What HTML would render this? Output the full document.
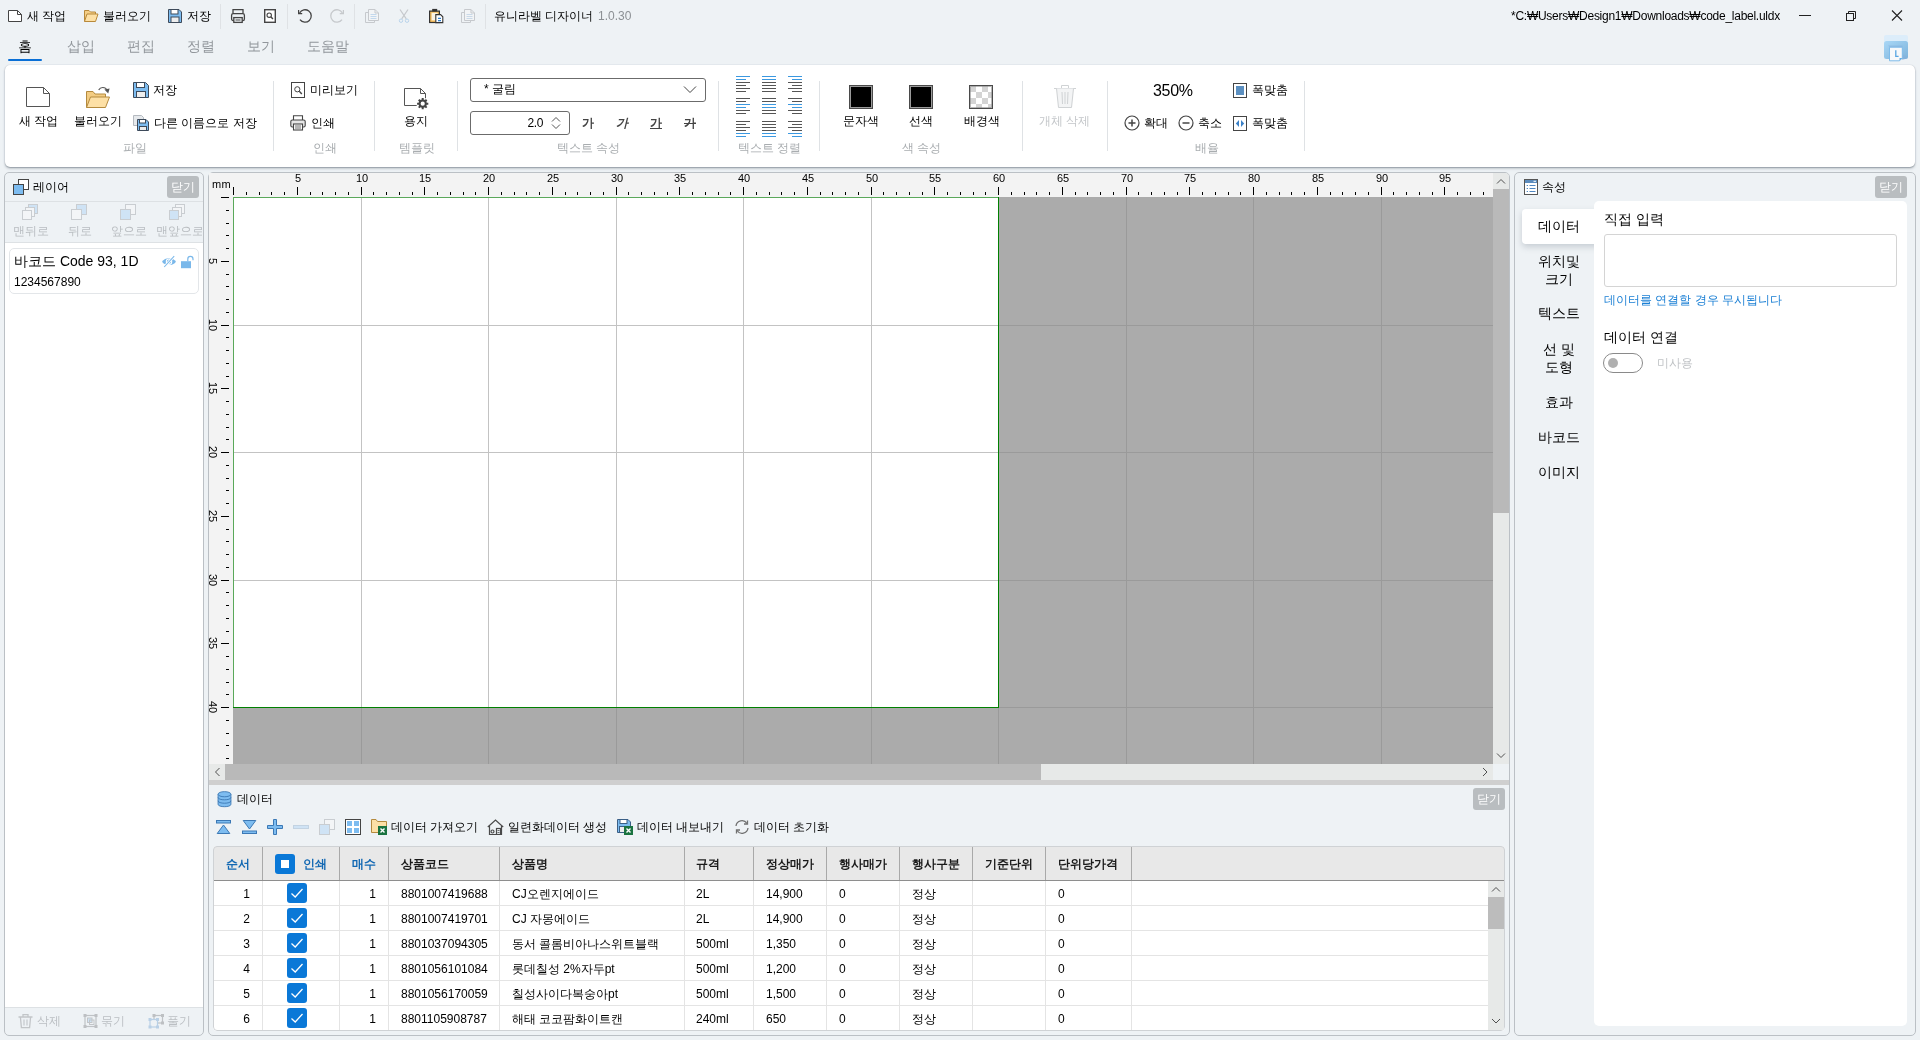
<!DOCTYPE html>
<html lang="ko">
<head>
<meta charset="utf-8">
<title>유니라벨 디자이너</title>
<style>
*{box-sizing:border-box;margin:0;padding:0}
html,body{width:1920px;height:1040px;overflow:hidden}
body{background:#eef2f5;font-family:"Liberation Sans",sans-serif;font-size:12px;color:#000;position:relative}
.abs{position:absolute}
.t{position:absolute;white-space:nowrap;line-height:16px;font-size:12px;color:#000}
.g{color:#a9adb0}
.sep{position:absolute;width:1px;background:#dfe2e5}
.rl{width:30px;text-align:center;font-size:11px;line-height:12px;color:#000}
.rlv{width:30px;height:12px;text-align:center;font-size:11px;line-height:12px;color:#000;transform:rotate(90deg)}
.th{font-size:12px;font-weight:bold;line-height:16px;white-space:nowrap;color:#1a1a1a}
.th.blue{color:#1268b3}
.td{font-size:12px;line-height:14px;white-space:nowrap;color:#000}
.close{position:absolute;width:32px;height:22px;border-radius:3px;background:#b9bdc0;color:#fff;font-size:12px;line-height:22px;text-align:center}
.panel{position:absolute;border:1px solid #bbc0c5;border-radius:5px;background:#eef2f5}
</style>
</head>
<body>
<div id="app" style="position:absolute;left:0;top:0;width:1920px;height:1040px;will-change:transform">
<!-- ===== title bar ===== -->
<svg class="abs" style="left:8px;top:10px" width="15" height="13" viewBox="0 0 15 13"><path d="M0.5 0.5 H9.5 L13.5 4.5 V11.5 H0.5 Z" fill="#fff" stroke="#444" stroke-width="1"/><path d="M9.5 0.5 V4.5 H13.5" fill="none" stroke="#444" stroke-width="1"/></svg>
<div class="t" style="left:27px;top:8px">새 작업</div>
<svg class="abs" style="left:84px;top:9px" width="15" height="14" viewBox="0 0 15 14"><path d="M0.5 12.5 V1.5 H5 L6.5 3 H11.5 V5" fill="#f5cf87" stroke="#b8893a" stroke-width="1"/><path d="M0.5 12.5 L3 5 H14 L11.5 12.5 Z" fill="#fde0a5" stroke="#b8893a" stroke-width="1"/></svg>
<div class="t" style="left:103px;top:8px">불러오기</div>
<svg class="abs" style="left:168px;top:9px" width="14" height="14" viewBox="0 0 14 14"><path d="M0.5 0.5 H11 L13.5 3 V13.5 H0.5 Z" fill="#7dbcf0" stroke="#3d4a5a" stroke-width="1"/><rect x="3" y="0.5" width="7" height="4.5" fill="#fff" stroke="#3d4a5a" stroke-width="1"/><rect x="3" y="8" width="8" height="5.5" fill="#eee" stroke="#3d4a5a" stroke-width="1"/></svg>
<div class="t" style="left:187px;top:8px">저장</div>
<div class="sep" style="left:220px;top:4px;height:25px"></div>
<!-- print -->
<svg class="abs" style="left:230px;top:8px" width="16" height="16" viewBox="0 0 16 16" fill="none" stroke="#444" stroke-width="1.3"><path d="M3 5.5 V1.7 H13 V5.5"/><rect x="1.6" y="5.6" width="12.8" height="7" rx="1.6"/><rect x="3.8" y="9.6" width="8.4" height="4.8" fill="#eef2f5"/><path d="M5.5 12 H10.5" stroke-width="1"/></svg>
<!-- preview -->
<svg class="abs" style="left:263px;top:8px" width="14" height="16" viewBox="0 0 14 16" fill="none" stroke="#444" stroke-width="1.4"><rect x="1.7" y="1.7" width="10.6" height="12.6" fill="#fff"/><circle cx="6.2" cy="7.2" r="2.2" stroke-width="1.1"/><path d="M7.8 8.8 L9.9 11" stroke-width="1.5"/></svg>
<div class="sep" style="left:287px;top:4px;height:25px"></div>
<!-- undo / redo -->
<svg class="abs" style="left:297px;top:8px" width="16" height="16" viewBox="0 0 16 16" fill="none" stroke="#444" stroke-width="1.3"><path d="M2.6 5 A6.2 6.2 0 1 1 3 11.6"/><path d="M1.6 2 V5.6 H5.2" stroke-width="1.2"/></svg>
<svg class="abs" style="left:329px;top:8px" width="16" height="16" viewBox="0 0 16 16" fill="none" stroke="#c6c9cc" stroke-width="1.3"><path d="M13.4 5 A6.2 6.2 0 1 0 13 11.6"/><path d="M14.4 2 V5.6 H10.8" stroke-width="1.2"/></svg>
<div class="sep" style="left:354px;top:4px;height:25px"></div>
<!-- copy (disabled) -->
<svg class="abs" style="left:364px;top:8px" width="16" height="16" viewBox="0 0 16 16" fill="none" stroke="#c6c9cd" stroke-width="1"><path d="M4.5 4.5 H1.5 V14.5 H10.5 V12.5"/><path d="M4.5 1.5 H11 L14.5 5 V12.5 H4.5 Z" fill="#f2f4f6"/><path d="M11 1.5 V5 H14.5"/><path d="M6.5 6.5 H12.5 M6.5 8.5 H12.5 M6.5 10.5 H12.5" stroke="#c2d8ed"/></svg>
<!-- cut (disabled) -->
<svg class="abs" style="left:397px;top:8px" width="14" height="16" viewBox="0 0 14 16" fill="none" stroke="#c6c9cd" stroke-width="1.2"><path d="M3 1.5 L9.3 10.8 M11 1.5 L4.7 10.8"/><circle cx="4" cy="12.7" r="1.7" stroke="#b9d3ea" stroke-width="1"/><circle cx="10" cy="12.7" r="1.7" stroke="#b9d3ea" stroke-width="1"/></svg>
<!-- paste -->
<svg class="abs" style="left:428px;top:8px" width="16" height="16" viewBox="0 0 16 16"><rect x="1.6" y="3.1" width="9.8" height="11.4" fill="#f6bd5c" stroke="#333" stroke-width="1.2"/><rect x="3.6" y="4.8" width="6" height="7.6" fill="#fbf3e4"/><rect x="4.2" y="0.9" width="5" height="2.6" fill="#333"/><path d="M7.8 6.6 H12.6 L14.8 8.8 V14.6 H7.8 Z" fill="#fff" stroke="#333" stroke-width="1.1"/><path d="M10 10.4 H13 M10 12.6 H13" stroke="#2f7fcf" stroke-width="1.1"/></svg>
<!-- duplicate (disabled) -->
<svg class="abs" style="left:460px;top:8px" width="16" height="16" viewBox="0 0 16 16" fill="none" stroke="#c6c9cd" stroke-width="1"><path d="M4.5 4.5 H1.5 V14.5 H10.5 V12.5"/><path d="M4.5 1.5 H11 L14.5 5 V12.5 H4.5 Z" fill="#f2f4f6"/><path d="M11 1.5 V5 H14.5"/><path d="M6.5 6.5 H12.5 M6.5 8.5 H12.5 M6.5 10.5 H12.5" stroke="#c9d9e8"/></svg>
<div class="sep" style="left:485px;top:4px;height:25px"></div>
<div class="t" style="left:494px;top:8px">유니라벨 디자이너</div>
<div class="t" style="left:598px;top:8px;color:#8c9094">1.0.30</div>
<div class="t" style="left:1511px;top:8px;letter-spacing:-0.26px">*C:₩Users₩Design1₩Downloads₩code_label.uldx</div>
<!-- window buttons -->
<svg class="abs" style="left:1790px;top:4px" width="126" height="24" viewBox="0 0 126 24" fill="none" stroke="#222" stroke-width="1"><path d="M9 11.5 H21"/><rect x="56.5" y="9.5" width="7" height="7"/><path d="M58.5 9.5 V7.5 H65.5 V14.5 H63.5"/><path d="M102 6.5 L112 16.5 M112 6.5 L102 16.5" stroke-width="1.1"/></svg>
<!-- ===== tabs ===== -->
<div class="t" style="left:18px;top:37px;font-size:14px;line-height:18px">홈</div>
<div class="t" style="left:67px;top:37px;font-size:14px;line-height:18px;color:#92979c">삽입</div>
<div class="t" style="left:127px;top:37px;font-size:14px;line-height:18px;color:#92979c">편집</div>
<div class="t" style="left:187px;top:37px;font-size:14px;line-height:18px;color:#92979c">정렬</div>
<div class="t" style="left:247px;top:37px;font-size:14px;line-height:18px;color:#92979c">보기</div>
<div class="t" style="left:307px;top:37px;font-size:14px;line-height:18px;color:#92979c">도움말</div>
<div class="abs" style="left:8px;top:59px;width:34px;height:2px;background:#0a6fd6;border-radius:1px"></div>
<!-- logo -->
<svg class="abs" style="left:1883px;top:34px" width="26" height="28" viewBox="0 0 26 28"><defs><linearGradient id="lg1" x1="0" y1="0" x2="1" y2="1"><stop offset="0" stop-color="#a9d7f6"/><stop offset="1" stop-color="#7db3db"/></linearGradient></defs><rect x="1" y="1" width="24" height="9" rx="2" fill="#dcedfa"/><rect x="1" y="7" width="24" height="18" rx="2.5" fill="url(#lg1)"/><path d="M5 11.5 H19.5 V20 L25 24 L19.5 26 Z" fill="#86aedb" opacity=".55"/><path d="M6.5 13.2 H19.3 V24 L16.5 26.8 H6.5 Z" fill="#f8f9fb" stroke="#7fbce9" stroke-width="1"/><path d="M16.5 26.8 V24 H19.3 Z" fill="#62ade6"/><path d="M12.8 16.2 V22.3 H15.6" fill="none" stroke="#5aa6e2" stroke-width="1.3"/></svg>
<!-- ===== ribbon ===== -->
<div class="abs" style="left:5px;top:65px;width:1910px;height:102px;background:#fff;border-radius:5px;box-shadow:0 1px 1.5px rgba(110,120,130,.6), 0 2px 3px rgba(110,120,130,.22), 0 0 1px rgba(110,120,130,.4)"></div>
<!-- group: file -->
<svg class="abs" style="left:26px;top:87px" width="25" height="21" viewBox="0 0 25 21"><path d="M0.5 0.5 H17.5 L23.5 6.5 V19.5 H0.5 Z" fill="#fff" stroke="#555" stroke-width="1"/><path d="M17.5 0.5 V6.5 H23.5" fill="none" stroke="#555" stroke-width="1"/></svg>
<div class="t" style="left:19px;top:113px">새 작업</div>
<svg class="abs" style="left:86px;top:85px" width="25" height="24" viewBox="0 0 25 24"><path d="M0.5 22.5 V6.5 H7 L9 9 H19.5 V12" fill="#f3cc82" stroke="#b48a3e" stroke-width="1"/><path d="M0.5 22.5 L4.5 12 H23.5 L19.5 22.5 Z" fill="#fde0a6" stroke="#b48a3e" stroke-width="1"/><path d="M12.7 5 A4.6 4.6 0 0 1 21 5.2" fill="none" stroke="#555" stroke-width="1.2"/><path d="M18.4 4.6 L23.6 3.4 L22.2 8.4 Z" fill="#555"/></svg>
<div class="t" style="left:74px;top:113px">불러오기</div>
<svg class="abs" style="left:133px;top:82px" width="16" height="16" viewBox="0 0 16 16"><path d="M0.5 0.5 H12.5 L15.5 3.5 V15.5 H0.5 Z" fill="#7dbcf0" stroke="#3d4a5a" stroke-width="1"/><rect x="3.5" y="0.5" width="8" height="5" fill="#fff" stroke="#3d4a5a" stroke-width="1"/><rect x="3.5" y="9.5" width="9" height="6" fill="#eee" stroke="#3d4a5a" stroke-width="1"/></svg>
<div class="t" style="left:153px;top:82px">저장</div>
<svg class="abs" style="left:133px;top:115px" width="16" height="16" viewBox="0 0 16 16"><path d="M0.5 0.5 H8.5 L10.5 2.5 V10.5 H0.5 Z" fill="#e6e9ec" stroke="#b5bac0" stroke-width="1"/><path d="M4.5 4.5 H13 L15.5 7 V15.5 H4.5 Z" fill="#7dbcf0" stroke="#3d4a5a" stroke-width="1"/><rect x="6.5" y="4.5" width="6" height="3.5" fill="#fff" stroke="#3d4a5a" stroke-width="1"/><rect x="6.5" y="11.5" width="7" height="4" fill="#eee" stroke="#3d4a5a" stroke-width="1"/></svg>
<div class="t" style="left:154px;top:115px">다른 이름으로 저장</div>
<div class="t g" style="left:123px;top:140px">파일</div>
<div class="sep" style="left:273px;top:81px;height:70px"></div>
<!-- group: print -->
<svg class="abs" style="left:291px;top:82px" width="15" height="16" viewBox="0 0 15 16" fill="none" stroke="#444" stroke-width="1"><rect x="0.5" y="0.5" width="13" height="15" fill="#fff"/><circle cx="6.3" cy="7.3" r="2.6"/><path d="M8.3 9.3 L10.8 11.9" stroke-width="1.4"/></svg>
<div class="t" style="left:310px;top:82px">미리보기</div>
<svg class="abs" style="left:290px;top:115px" width="16" height="16" viewBox="0 0 16 16" fill="none" stroke="#444" stroke-width="1.1"><path d="M3.5 5 V0.8 H12.5 V5"/><rect x="0.8" y="5" width="14.4" height="7" rx="1.5" fill="#e6e6e6"/><rect x="3.5" y="9" width="9" height="6" fill="#fff"/><path d="M5 11 H11 M5 13 H11" stroke-width="0.8"/></svg>
<div class="t" style="left:311px;top:115px">인쇄</div>
<div class="t g" style="left:313px;top:140px">인쇄</div>
<div class="sep" style="left:374px;top:81px;height:70px"></div>
<!-- group: template -->
<svg class="abs" style="left:404px;top:88px" width="26" height="23" viewBox="0 0 26 23"><path d="M0.5 0.5 H16.5 L21.5 5.5 V17.5 H0.5 Z" fill="#fff" stroke="#555" stroke-width="1"/><path d="M16.5 0.5 V5.5 H21.5" fill="none" stroke="#555" stroke-width="1"/><circle cx="18.7" cy="15.7" r="6.3" fill="#fff"/><path d="M22.10 15.70 L24.30 15.70 M21.10 18.10 L22.66 19.66 M18.70 19.10 L18.70 21.30 M16.30 18.10 L14.74 19.66 M15.30 15.70 L13.10 15.70 M16.30 13.30 L14.74 11.74 M18.70 12.30 L18.70 10.10 M21.10 13.30 L22.66 11.74 " stroke="#444" stroke-width="2" fill="none"/><circle cx="18.7" cy="15.7" r="3.1" fill="#fff" stroke="#444" stroke-width="2"/></svg>
<div class="t" style="left:404px;top:113px">용지</div>
<div class="t g" style="left:399px;top:140px">템플릿</div>
<div class="sep" style="left:457px;top:81px;height:70px"></div>
<!-- group: text props -->
<div class="abs" style="left:470px;top:78px;width:236px;height:24px;border:1px solid #6b6b6b;border-radius:3px;background:#fff"></div>
<div class="t" style="left:484px;top:81px">* 굴림</div>
<svg class="abs" style="left:682px;top:85px" width="15" height="9" viewBox="0 0 15 9" fill="none" stroke="#444" stroke-width="1"><path d="M2 1.5 L8 7.5 L14 1.5"/></svg>
<div class="abs" style="left:470px;top:111px;width:100px;height:24px;border:1px solid #6b6b6b;border-radius:3px;background:#fff"></div>
<div class="t" style="left:515px;top:115px;width:28px;text-align:right;letter-spacing:-0.4px">2.0</div>
<svg class="abs" style="left:551px;top:116px" width="10" height="14" viewBox="0 0 10 14" fill="none" stroke="#555" stroke-width="1"><path d="M1 5.5 L5 1.5 L9 5.5"/><path d="M1 8.5 L5 12.5 L9 8.5"/></svg>
<div class="t" style="left:582px;top:115px;font-weight:bold;color:#444">가</div>
<div class="t" style="left:616px;top:115px;font-weight:bold;font-style:italic;color:#444">가</div>
<div class="t" style="left:650px;top:115px;font-weight:bold;text-decoration:underline;color:#444">가</div>
<div class="t" style="left:684px;top:115px;font-weight:bold;text-decoration:line-through;color:#444">가</div>
<div class="t g" style="left:557px;top:140px">텍스트 속성</div>
<div class="sep" style="left:718px;top:81px;height:70px"></div>
<!-- group: text align -->
<svg class="abs" style="left:736px;top:76px" width="66" height="61" viewBox="0 0 66 61" shape-rendering="crispEdges">
<rect x="0" y="0" width="14" height="1" fill="#3b98e0"/>
<rect x="0" y="3" width="10" height="1" fill="#3b98e0"/>
<rect x="0" y="6" width="14" height="1" fill="#555"/>
<rect x="0" y="9" width="10" height="1" fill="#555"/>
<rect x="0" y="12" width="14" height="1" fill="#555"/>
<rect x="0" y="15" width="10" height="1" fill="#555"/>
<rect x="26" y="0" width="14" height="1" fill="#3b98e0"/>
<rect x="26" y="3" width="14" height="1" fill="#3b98e0"/>
<rect x="26" y="6" width="14" height="1" fill="#555"/>
<rect x="26" y="9" width="14" height="1" fill="#555"/>
<rect x="26" y="12" width="14" height="1" fill="#555"/>
<rect x="26" y="15" width="14" height="1" fill="#555"/>
<rect x="52" y="0" width="14" height="1" fill="#3b98e0"/>
<rect x="56" y="3" width="10" height="1" fill="#3b98e0"/>
<rect x="52" y="6" width="14" height="1" fill="#555"/>
<rect x="56" y="9" width="10" height="1" fill="#555"/>
<rect x="52" y="12" width="14" height="1" fill="#555"/>
<rect x="56" y="15" width="10" height="1" fill="#555"/>
<rect x="0" y="22" width="14" height="1" fill="#555"/>
<rect x="0" y="25" width="10" height="1" fill="#555"/>
<rect x="0" y="28" width="14" height="1" fill="#3b98e0"/>
<rect x="0" y="31" width="10" height="1" fill="#3b98e0"/>
<rect x="0" y="34" width="14" height="1" fill="#555"/>
<rect x="0" y="37" width="10" height="1" fill="#555"/>
<rect x="26" y="22" width="14" height="1" fill="#555"/>
<rect x="26" y="25" width="14" height="1" fill="#555"/>
<rect x="26" y="28" width="14" height="1" fill="#3b98e0"/>
<rect x="26" y="31" width="14" height="1" fill="#3b98e0"/>
<rect x="26" y="34" width="14" height="1" fill="#555"/>
<rect x="26" y="37" width="14" height="1" fill="#555"/>
<rect x="52" y="22" width="14" height="1" fill="#555"/>
<rect x="56" y="25" width="10" height="1" fill="#555"/>
<rect x="52" y="28" width="14" height="1" fill="#3b98e0"/>
<rect x="56" y="31" width="10" height="1" fill="#3b98e0"/>
<rect x="52" y="34" width="14" height="1" fill="#555"/>
<rect x="56" y="37" width="10" height="1" fill="#555"/>
<rect x="0" y="45" width="14" height="1" fill="#555"/>
<rect x="0" y="48" width="10" height="1" fill="#555"/>
<rect x="0" y="51" width="14" height="1" fill="#555"/>
<rect x="0" y="54" width="10" height="1" fill="#555"/>
<rect x="0" y="57" width="14" height="1" fill="#3b98e0"/>
<rect x="0" y="60" width="10" height="1" fill="#3b98e0"/>
<rect x="26" y="45" width="14" height="1" fill="#555"/>
<rect x="26" y="48" width="14" height="1" fill="#555"/>
<rect x="26" y="51" width="14" height="1" fill="#555"/>
<rect x="26" y="54" width="14" height="1" fill="#555"/>
<rect x="26" y="57" width="14" height="1" fill="#3b98e0"/>
<rect x="26" y="60" width="14" height="1" fill="#3b98e0"/>
<rect x="52" y="45" width="14" height="1" fill="#555"/>
<rect x="56" y="48" width="10" height="1" fill="#555"/>
<rect x="52" y="51" width="14" height="1" fill="#555"/>
<rect x="56" y="54" width="10" height="1" fill="#555"/>
<rect x="52" y="57" width="14" height="1" fill="#3b98e0"/>
<rect x="56" y="60" width="10" height="1" fill="#3b98e0"/>
</svg>
<div class="t g" style="left:738px;top:140px">텍스트 정렬</div>
<div class="sep" style="left:819px;top:81px;height:70px"></div>
<!-- group: colour -->
<div class="abs" style="left:849px;top:85px;width:24px;height:24px;background:#000;border:1px solid #4a4a4a;box-shadow:inset 0 0 0 1px #9a9a9a"></div>
<div class="t" style="left:843px;top:113px">문자색</div>
<div class="abs" style="left:909px;top:85px;width:24px;height:24px;background:#000;border:1px solid #4a4a4a;box-shadow:inset 0 0 0 1px #9a9a9a"></div>
<div class="t" style="left:909px;top:113px">선색</div>
<svg class="abs" style="left:969px;top:85px" width="24" height="24" viewBox="0 0 24 24" shape-rendering="crispEdges"><rect width="24" height="24" fill="#fff"/><g fill="#d4d4d4"><rect x="1" y="1" width="6" height="6"/><rect x="13" y="1" width="6" height="6"/><rect x="7" y="7" width="6" height="6"/><rect x="19" y="7" width="4" height="6"/><rect x="1" y="13" width="6" height="6"/><rect x="13" y="13" width="6" height="6"/><rect x="7" y="19" width="6" height="4"/><rect x="19" y="19" width="4" height="4"/></g><rect x="0.5" y="0.5" width="23" height="23" fill="none" stroke="#4a4a4a"/><rect x="1.5" y="1.5" width="21" height="21" fill="none" stroke="#8a8a8a" stroke-opacity=".6"/></svg>
<div class="t" style="left:964px;top:113px">배경색</div>
<div class="t g" style="left:902px;top:140px">색 속성</div>
<div class="sep" style="left:1022px;top:81px;height:70px"></div>
<!-- group: delete -->
<svg class="abs" style="left:1053px;top:84px" width="24" height="25" viewBox="0 0 24 25" fill="none" stroke="#cfd2d4" stroke-width="1"><path d="M1 4.5 H23"/><path d="M8.5 4.5 V1.5 H15.5 V4.5"/><path d="M3.5 4.5 L5.5 23.5 H18.5 L20.5 4.5" fill="#f3f4f5"/><path d="M9 8 L9.5 20 M12 8 V20 M15 8 L14.5 20"/></svg>
<div class="t" style="left:1039px;top:113px;color:#c3c6c9">개체 삭제</div>
<div class="sep" style="left:1107px;top:81px;height:70px"></div>
<!-- group: zoom -->
<div class="t" style="left:1153px;top:81px;font-size:16px;line-height:20px;letter-spacing:-0.3px">350%</div>
<svg class="abs" style="left:1233px;top:83px" width="14" height="15" viewBox="0 0 14 15" shape-rendering="crispEdges"><rect x="0.5" y="0.5" width="13" height="14" fill="#fff" stroke="#444"/><rect x="3" y="3" width="8" height="9" fill="#5b8fc0"/></svg>
<div class="t" style="left:1252px;top:82px">폭맞춤</div>
<svg class="abs" style="left:1124px;top:115px" width="16" height="16" viewBox="0 0 16 16" fill="none" stroke="#444" stroke-width="1.2"><circle cx="8" cy="8" r="7"/><path d="M4.5 8 H11.5 M8 4.5 V11.5" stroke-width="1.5"/></svg>
<div class="t" style="left:1144px;top:115px">확대</div>
<svg class="abs" style="left:1178px;top:115px" width="16" height="16" viewBox="0 0 16 16" fill="none" stroke="#444" stroke-width="1.2"><circle cx="8" cy="8" r="7"/><path d="M4.5 8 H11.5" stroke-width="1.5"/></svg>
<div class="t" style="left:1198px;top:115px">축소</div>
<svg class="abs" style="left:1233px;top:116px" width="14" height="15" viewBox="0 0 14 15"><rect x="0.5" y="0.5" width="13" height="14" fill="#fff" stroke="#444"/><path d="M6 4 L2.8 7.5 L6 11 Z M8 4 L11.2 7.5 L8 11 Z" fill="#3c82c8"/></svg>
<div class="t" style="left:1252px;top:115px">폭맞춤</div>
<div class="t g" style="left:1195px;top:140px">배율</div>
<div class="sep" style="left:1304px;top:81px;height:70px"></div>
<!-- ===== layer panel ===== -->
<div class="panel" style="left:4px;top:172px;width:200px;height:864px"></div>
<div class="abs" style="left:5px;top:201px;width:198px;height:1px;background:#dde1e4"></div>
<div class="abs" style="left:5px;top:242px;width:198px;height:1px;background:#dde1e4"></div>
<div class="abs" style="left:5px;top:243px;width:198px;height:764px;background:#fff"></div>
<div class="abs" style="left:5px;top:1007px;width:198px;height:1px;background:#dde1e4"></div>
<svg class="abs" style="left:13px;top:179px" width="16" height="16" viewBox="0 0 16 16"><rect x="5.5" y="0.5" width="10" height="10" fill="#fff" stroke="#444"/><rect x="0.5" y="5.5" width="10" height="10" fill="#7dbcf0" stroke="#444"/></svg>
<div class="t" style="left:33px;top:179px">레이어</div>
<div class="close" style="left:167px;top:176px">닫기</div>
<!-- order buttons (disabled) -->
<svg class="abs" style="left:22px;top:204px" width="16" height="16" viewBox="0 0 16 16" stroke="#c9cdd1"><rect x="6.5" y="0.5" width="9" height="9" fill="#cfe3f5"/><rect x="3.5" y="3.5" width="9" height="9" fill="#f3f5f7"/><rect x="0.5" y="6.5" width="9" height="9" fill="#f3f5f7"/></svg>
<div class="t" style="left:13px;top:223px;color:#b9bdc1">맨뒤로</div>
<svg class="abs" style="left:71px;top:204px" width="16" height="16" viewBox="0 0 16 16" stroke="#c9cdd1"><rect x="5.5" y="0.5" width="10" height="10" fill="#cfe3f5"/><rect x="0.5" y="5.5" width="10" height="10" fill="#f3f5f7"/></svg>
<div class="t" style="left:68px;top:223px;color:#b9bdc1">뒤로</div>
<svg class="abs" style="left:120px;top:204px" width="16" height="16" viewBox="0 0 16 16" stroke="#c9cdd1"><rect x="5.5" y="0.5" width="10" height="10" fill="#f3f5f7"/><rect x="0.5" y="5.5" width="10" height="10" fill="#cfe3f5"/></svg>
<div class="t" style="left:111px;top:223px;color:#b9bdc1">앞으로</div>
<svg class="abs" style="left:169px;top:204px" width="16" height="16" viewBox="0 0 16 16" stroke="#c9cdd1"><rect x="6.5" y="0.5" width="9" height="9" fill="#f3f5f7"/><rect x="3.5" y="3.5" width="9" height="9" fill="#f3f5f7"/><rect x="0.5" y="6.5" width="9" height="9" fill="#cfe3f5"/></svg>
<div class="t" style="left:156px;top:223px;color:#b9bdc1;width:46px;overflow:hidden">맨앞으로</div>
<!-- layer card -->
<div class="abs" style="left:9px;top:248px;width:190px;height:46px;border:1px solid #e3e6e9;border-radius:5px;background:#fff"></div>
<div class="t" style="left:14px;top:252px;font-size:14px;line-height:18px">바코드 Code 93, 1D</div>
<div class="t" style="left:14px;top:275px;font-size:12px;line-height:14px">1234567890</div>
<svg class="abs" style="left:161px;top:255px" width="16" height="13" viewBox="0 0 16 13"><path d="M1 6.7 C4 2.2 12 2.2 15 6.7 C12 11.2 4 11.2 1 6.7 Z" fill="#7ab8ea"/><circle cx="8" cy="6.7" r="2.7" fill="none" stroke="#fff" stroke-width="1.1"/><path d="M3.2 12 L13.2 1.2" stroke="#fff" stroke-width="2.6"/><path d="M3.2 12 L13.2 1.2" stroke="#7ab8ea" stroke-width="1.1"/></svg>
<svg class="abs" style="left:180px;top:255px" width="14" height="14" viewBox="0 0 14 14"><path d="M7.8 6.2 V3.9 A2.6 2.6 0 0 1 13 3.9 V5.2" fill="none" stroke="#7ab8ea" stroke-width="1.2"/><rect x="1" y="6.2" width="10" height="7" fill="#7ab8ea"/></svg>
<!-- bottom buttons (disabled) -->
<svg class="abs" style="left:18px;top:1013px" width="15" height="16" viewBox="0 0 15 16" fill="none" stroke="#c2c5c8" stroke-width="1.3"><path d="M0.5 4 H14.5 M5 4 V1.7 H10 V4 M2.4 4 L3.4 14.6 H11.6 L12.6 4"/><path d="M6 6.5 V12.5 M9 6.5 V12.5" stroke-width="1.1"/></svg>
<div class="t" style="left:37px;top:1013px;color:#bbbfc3">삭제</div>
<svg class="abs" style="left:83px;top:1013px" width="15" height="16" viewBox="0 0 15 16"><rect x="2" y="2.5" width="11" height="11" fill="none" stroke="#bfc2c5" stroke-width="1.2"/><rect x="4.5" y="5" width="4.5" height="4.5" fill="#cfe3f5" stroke="#c2c5c8"/><rect x="6.5" y="7" width="4.5" height="4.5" fill="none" stroke="#c2c5c8"/><g fill="#bdc0c3"><rect x="0.5" y="1" width="3" height="3"/><rect x="11.5" y="1" width="3" height="3"/><rect x="0.5" y="12" width="3" height="3"/><rect x="11.5" y="12" width="3" height="3"/></g></svg>
<div class="t" style="left:101px;top:1013px;color:#bbbfc3">묶기</div>
<svg class="abs" style="left:148px;top:1013px" width="16" height="16" viewBox="0 0 16 16"><rect x="6" y="2.5" width="8.5" height="7.5" fill="none" stroke="#bfc2c5" stroke-width="1.2"/><g fill="#bdc0c3"><rect x="4.5" y="1" width="3" height="3"/><rect x="13" y="1" width="3" height="3"/><rect x="13" y="8.5" width="3" height="3"/></g><rect x="2" y="6.5" width="7.5" height="7.5" fill="#eef2f5" stroke="#b9d0e6" stroke-width="1.2"/><g fill="#b9d0e6"><rect x="0.5" y="5" width="3" height="3"/><rect x="8" y="5" width="3" height="3"/><rect x="0.5" y="12.5" width="3" height="3"/><rect x="8" y="12.5" width="3" height="3"/></g></svg>
<div class="t" style="left:167px;top:1013px;color:#bbbfc3">풀기</div>
<!-- ===== center container ===== -->
<div class="panel" style="left:208px;top:172px;width:1302px;height:864px"></div>
<svg class="abs" style="left:233px;top:197px" width="1260" height="567" shape-rendering="crispEdges">
<rect width="1260" height="567" fill="#ababab"/>
<rect x="128" y="0" width="1" height="567" fill="#9a9a9a"/>
<rect x="255" y="0" width="1" height="567" fill="#9a9a9a"/>
<rect x="383" y="0" width="1" height="567" fill="#9a9a9a"/>
<rect x="510" y="0" width="1" height="567" fill="#9a9a9a"/>
<rect x="638" y="0" width="1" height="567" fill="#9a9a9a"/>
<rect x="765" y="0" width="1" height="567" fill="#9a9a9a"/>
<rect x="893" y="0" width="1" height="567" fill="#9a9a9a"/>
<rect x="1020" y="0" width="1" height="567" fill="#9a9a9a"/>
<rect x="1148" y="0" width="1" height="567" fill="#9a9a9a"/>
<rect x="0" y="128" width="1260" height="1" fill="#9a9a9a"/>
<rect x="0" y="255" width="1260" height="1" fill="#9a9a9a"/>
<rect x="0" y="383" width="1260" height="1" fill="#9a9a9a"/>
<rect x="0" y="510" width="1260" height="1" fill="#9a9a9a"/>
<rect x="0" y="0" width="765" height="510" fill="#fff"/>
<rect x="128" y="0" width="1" height="510" fill="#c3c3c3"/>
<rect x="255" y="0" width="1" height="510" fill="#c3c3c3"/>
<rect x="383" y="0" width="1" height="510" fill="#c3c3c3"/>
<rect x="510" y="0" width="1" height="510" fill="#c3c3c3"/>
<rect x="638" y="0" width="1" height="510" fill="#c3c3c3"/>
<rect x="0" y="128" width="765" height="1" fill="#c3c3c3"/>
<rect x="0" y="255" width="765" height="1" fill="#c3c3c3"/>
<rect x="0" y="383" width="765" height="1" fill="#c3c3c3"/>
<rect x="0" y="0" width="766" height="1" fill="#5aa85a"/>
<rect x="0" y="0" width="1" height="511" fill="#5aa85a"/>
<rect x="0" y="510" width="766" height="1" fill="#008000"/>
<rect x="765" y="0" width="1" height="511" fill="#008000"/>
</svg>
<svg class="abs" style="left:209px;top:173px" width="1284" height="24" shape-rendering="crispEdges">
<rect width="1284" height="24" fill="#f3f3f3"/>
<rect x="24" y="14" width="1" height="8" fill="#000"/>
<rect x="37" y="19" width="1" height="3" fill="#000"/>
<rect x="50" y="19" width="1" height="3" fill="#000"/>
<rect x="62" y="19" width="1" height="3" fill="#000"/>
<rect x="75" y="19" width="1" height="3" fill="#000"/>
<rect x="88" y="14" width="1" height="8" fill="#000"/>
<rect x="101" y="19" width="1" height="3" fill="#000"/>
<rect x="113" y="19" width="1" height="3" fill="#000"/>
<rect x="126" y="19" width="1" height="3" fill="#000"/>
<rect x="139" y="19" width="1" height="3" fill="#000"/>
<rect x="152" y="14" width="1" height="8" fill="#000"/>
<rect x="164" y="19" width="1" height="3" fill="#000"/>
<rect x="177" y="19" width="1" height="3" fill="#000"/>
<rect x="190" y="19" width="1" height="3" fill="#000"/>
<rect x="203" y="19" width="1" height="3" fill="#000"/>
<rect x="215" y="14" width="1" height="8" fill="#000"/>
<rect x="228" y="19" width="1" height="3" fill="#000"/>
<rect x="241" y="19" width="1" height="3" fill="#000"/>
<rect x="254" y="19" width="1" height="3" fill="#000"/>
<rect x="266" y="19" width="1" height="3" fill="#000"/>
<rect x="279" y="14" width="1" height="8" fill="#000"/>
<rect x="292" y="19" width="1" height="3" fill="#000"/>
<rect x="305" y="19" width="1" height="3" fill="#000"/>
<rect x="317" y="19" width="1" height="3" fill="#000"/>
<rect x="330" y="19" width="1" height="3" fill="#000"/>
<rect x="343" y="14" width="1" height="8" fill="#000"/>
<rect x="356" y="19" width="1" height="3" fill="#000"/>
<rect x="368" y="19" width="1" height="3" fill="#000"/>
<rect x="381" y="19" width="1" height="3" fill="#000"/>
<rect x="394" y="19" width="1" height="3" fill="#000"/>
<rect x="407" y="14" width="1" height="8" fill="#000"/>
<rect x="419" y="19" width="1" height="3" fill="#000"/>
<rect x="432" y="19" width="1" height="3" fill="#000"/>
<rect x="445" y="19" width="1" height="3" fill="#000"/>
<rect x="458" y="19" width="1" height="3" fill="#000"/>
<rect x="470" y="14" width="1" height="8" fill="#000"/>
<rect x="483" y="19" width="1" height="3" fill="#000"/>
<rect x="496" y="19" width="1" height="3" fill="#000"/>
<rect x="509" y="19" width="1" height="3" fill="#000"/>
<rect x="521" y="19" width="1" height="3" fill="#000"/>
<rect x="534" y="14" width="1" height="8" fill="#000"/>
<rect x="547" y="19" width="1" height="3" fill="#000"/>
<rect x="560" y="19" width="1" height="3" fill="#000"/>
<rect x="572" y="19" width="1" height="3" fill="#000"/>
<rect x="585" y="19" width="1" height="3" fill="#000"/>
<rect x="598" y="14" width="1" height="8" fill="#000"/>
<rect x="611" y="19" width="1" height="3" fill="#000"/>
<rect x="623" y="19" width="1" height="3" fill="#000"/>
<rect x="636" y="19" width="1" height="3" fill="#000"/>
<rect x="649" y="19" width="1" height="3" fill="#000"/>
<rect x="662" y="14" width="1" height="8" fill="#000"/>
<rect x="674" y="19" width="1" height="3" fill="#000"/>
<rect x="687" y="19" width="1" height="3" fill="#000"/>
<rect x="700" y="19" width="1" height="3" fill="#000"/>
<rect x="713" y="19" width="1" height="3" fill="#000"/>
<rect x="725" y="14" width="1" height="8" fill="#000"/>
<rect x="738" y="19" width="1" height="3" fill="#000"/>
<rect x="751" y="19" width="1" height="3" fill="#000"/>
<rect x="764" y="19" width="1" height="3" fill="#000"/>
<rect x="776" y="19" width="1" height="3" fill="#000"/>
<rect x="789" y="14" width="1" height="8" fill="#000"/>
<rect x="802" y="19" width="1" height="3" fill="#000"/>
<rect x="815" y="19" width="1" height="3" fill="#000"/>
<rect x="827" y="19" width="1" height="3" fill="#000"/>
<rect x="840" y="19" width="1" height="3" fill="#000"/>
<rect x="853" y="14" width="1" height="8" fill="#000"/>
<rect x="866" y="19" width="1" height="3" fill="#000"/>
<rect x="878" y="19" width="1" height="3" fill="#000"/>
<rect x="891" y="19" width="1" height="3" fill="#000"/>
<rect x="904" y="19" width="1" height="3" fill="#000"/>
<rect x="917" y="14" width="1" height="8" fill="#000"/>
<rect x="929" y="19" width="1" height="3" fill="#000"/>
<rect x="942" y="19" width="1" height="3" fill="#000"/>
<rect x="955" y="19" width="1" height="3" fill="#000"/>
<rect x="968" y="19" width="1" height="3" fill="#000"/>
<rect x="980" y="14" width="1" height="8" fill="#000"/>
<rect x="993" y="19" width="1" height="3" fill="#000"/>
<rect x="1006" y="19" width="1" height="3" fill="#000"/>
<rect x="1019" y="19" width="1" height="3" fill="#000"/>
<rect x="1031" y="19" width="1" height="3" fill="#000"/>
<rect x="1044" y="14" width="1" height="8" fill="#000"/>
<rect x="1057" y="19" width="1" height="3" fill="#000"/>
<rect x="1070" y="19" width="1" height="3" fill="#000"/>
<rect x="1082" y="19" width="1" height="3" fill="#000"/>
<rect x="1095" y="19" width="1" height="3" fill="#000"/>
<rect x="1108" y="14" width="1" height="8" fill="#000"/>
<rect x="1121" y="19" width="1" height="3" fill="#000"/>
<rect x="1133" y="19" width="1" height="3" fill="#000"/>
<rect x="1146" y="19" width="1" height="3" fill="#000"/>
<rect x="1159" y="19" width="1" height="3" fill="#000"/>
<rect x="1172" y="14" width="1" height="8" fill="#000"/>
<rect x="1184" y="19" width="1" height="3" fill="#000"/>
<rect x="1197" y="19" width="1" height="3" fill="#000"/>
<rect x="1210" y="19" width="1" height="3" fill="#000"/>
<rect x="1223" y="19" width="1" height="3" fill="#000"/>
<rect x="1235" y="14" width="1" height="8" fill="#000"/>
<rect x="1248" y="19" width="1" height="3" fill="#000"/>
<rect x="1261" y="19" width="1" height="3" fill="#000"/>
<rect x="1274" y="19" width="1" height="3" fill="#000"/>
</svg>
<div class="abs rl" style="left:283px;top:172px">5</div>
<div class="abs rl" style="left:347px;top:172px">10</div>
<div class="abs rl" style="left:410px;top:172px">15</div>
<div class="abs rl" style="left:474px;top:172px">20</div>
<div class="abs rl" style="left:538px;top:172px">25</div>
<div class="abs rl" style="left:602px;top:172px">30</div>
<div class="abs rl" style="left:665px;top:172px">35</div>
<div class="abs rl" style="left:729px;top:172px">40</div>
<div class="abs rl" style="left:793px;top:172px">45</div>
<div class="abs rl" style="left:857px;top:172px">50</div>
<div class="abs rl" style="left:920px;top:172px">55</div>
<div class="abs rl" style="left:984px;top:172px">60</div>
<div class="abs rl" style="left:1048px;top:172px">65</div>
<div class="abs rl" style="left:1112px;top:172px">70</div>
<div class="abs rl" style="left:1175px;top:172px">75</div>
<div class="abs rl" style="left:1239px;top:172px">80</div>
<div class="abs rl" style="left:1303px;top:172px">85</div>
<div class="abs rl" style="left:1367px;top:172px">90</div>
<div class="abs rl" style="left:1430px;top:172px">95</div>
<div class="abs" style="left:212px;top:178px;font-size:11px;line-height:12px;color:#000;letter-spacing:0.3px">mm</div>
<svg class="abs" style="left:209px;top:197px" width="24" height="567" shape-rendering="crispEdges">
<rect width="24" height="567" fill="#f3f3f3"/>
<rect x="12" y="0" width="8" height="1" fill="#000"/>
<rect x="17" y="13" width="3" height="1" fill="#000"/>
<rect x="17" y="26" width="3" height="1" fill="#000"/>
<rect x="17" y="38" width="3" height="1" fill="#000"/>
<rect x="17" y="51" width="3" height="1" fill="#000"/>
<rect x="12" y="64" width="8" height="1" fill="#000"/>
<rect x="17" y="77" width="3" height="1" fill="#000"/>
<rect x="17" y="89" width="3" height="1" fill="#000"/>
<rect x="17" y="102" width="3" height="1" fill="#000"/>
<rect x="17" y="115" width="3" height="1" fill="#000"/>
<rect x="12" y="128" width="8" height="1" fill="#000"/>
<rect x="17" y="140" width="3" height="1" fill="#000"/>
<rect x="17" y="153" width="3" height="1" fill="#000"/>
<rect x="17" y="166" width="3" height="1" fill="#000"/>
<rect x="17" y="179" width="3" height="1" fill="#000"/>
<rect x="12" y="191" width="8" height="1" fill="#000"/>
<rect x="17" y="204" width="3" height="1" fill="#000"/>
<rect x="17" y="217" width="3" height="1" fill="#000"/>
<rect x="17" y="230" width="3" height="1" fill="#000"/>
<rect x="17" y="242" width="3" height="1" fill="#000"/>
<rect x="12" y="255" width="8" height="1" fill="#000"/>
<rect x="17" y="268" width="3" height="1" fill="#000"/>
<rect x="17" y="281" width="3" height="1" fill="#000"/>
<rect x="17" y="293" width="3" height="1" fill="#000"/>
<rect x="17" y="306" width="3" height="1" fill="#000"/>
<rect x="12" y="319" width="8" height="1" fill="#000"/>
<rect x="17" y="332" width="3" height="1" fill="#000"/>
<rect x="17" y="344" width="3" height="1" fill="#000"/>
<rect x="17" y="357" width="3" height="1" fill="#000"/>
<rect x="17" y="370" width="3" height="1" fill="#000"/>
<rect x="12" y="383" width="8" height="1" fill="#000"/>
<rect x="17" y="395" width="3" height="1" fill="#000"/>
<rect x="17" y="408" width="3" height="1" fill="#000"/>
<rect x="17" y="421" width="3" height="1" fill="#000"/>
<rect x="17" y="434" width="3" height="1" fill="#000"/>
<rect x="12" y="446" width="8" height="1" fill="#000"/>
<rect x="17" y="459" width="3" height="1" fill="#000"/>
<rect x="17" y="472" width="3" height="1" fill="#000"/>
<rect x="17" y="485" width="3" height="1" fill="#000"/>
<rect x="17" y="497" width="3" height="1" fill="#000"/>
<rect x="12" y="510" width="8" height="1" fill="#000"/>
<rect x="17" y="523" width="3" height="1" fill="#000"/>
<rect x="17" y="536" width="3" height="1" fill="#000"/>
<rect x="17" y="548" width="3" height="1" fill="#000"/>
<rect x="17" y="561" width="3" height="1" fill="#000"/>
</svg>
<div class="abs rlv" style="left:198px;top:255px">5</div>
<div class="abs rlv" style="left:198px;top:319px">10</div>
<div class="abs rlv" style="left:198px;top:382px">15</div>
<div class="abs rlv" style="left:198px;top:446px">20</div>
<div class="abs rlv" style="left:198px;top:510px">25</div>
<div class="abs rlv" style="left:198px;top:574px">30</div>
<div class="abs rlv" style="left:198px;top:637px">35</div>
<div class="abs rlv" style="left:198px;top:701px">40</div>
<!-- vertical scrollbar -->
<div class="abs" style="left:1493px;top:173px;width:16px;height:591px;background:#e7e9e8;border-top-right-radius:4px"></div>
<div class="abs" style="left:1493px;top:189px;width:16px;height:324px;background:#b9b9b9"></div>
<svg class="abs" style="left:1493px;top:173px" width="16" height="591"><path d="M4 10.5 L8 6.5 L12 10.5" fill="none" stroke="#505050" stroke-width="1"/><path d="M4 580.5 L8 584.5 L12 580.5" fill="none" stroke="#505050" stroke-width="1"/></svg>
<!-- horizontal scrollbar -->
<div class="abs" style="left:209px;top:764px;width:1284px;height:16px;background:#e7e9e8"></div>
<div class="abs" style="left:225px;top:764px;width:816px;height:16px;background:#b9b9b9"></div>
<svg class="abs" style="left:209px;top:764px" width="1284" height="16"><path d="M10.5 4 L6.5 8 L10.5 12" fill="none" stroke="#505050" stroke-width="1"/><path d="M1274 4 L1278 8 L1274 12" fill="none" stroke="#505050" stroke-width="1"/></svg>
<!-- splitter -->
<div class="abs" style="left:209px;top:780px;width:1300px;height:5px;background:#cfcfcf"></div>
<!-- ===== data panel ===== -->
<svg class="abs" style="left:217px;top:791px" width="15" height="16.5" viewBox="0 0 16 18" stroke="#3b78b5" stroke-width="1" fill="#7dbcf0"><path d="M1 3.5 V14.5 C1 18 15 18 15 14.5 V3.5"/><ellipse cx="8" cy="3.5" rx="7" ry="2.8"/><path d="M1 7 C1 10.5 15 10.5 15 7 M1 10.7 C1 14.2 15 14.2 15 10.7" fill="none"/></svg>
<div class="t" style="left:237px;top:791px">데이터</div>
<div class="close" style="left:1473px;top:788px">닫기</div>
<!-- data toolbar -->
<svg class="abs" style="left:216px;top:820px" width="15" height="15" viewBox="0 0 15 15" fill="#7dbcf0" stroke="#3b78b5" stroke-width="1"><rect x="0.5" y="0.5" width="14" height="2.5"/><path d="M7.5 5 L13.8 13.5 H1.2 Z"/></svg>
<svg class="abs" style="left:242px;top:820px" width="15" height="15" viewBox="0 0 15 15" fill="#7dbcf0" stroke="#3b78b5" stroke-width="1"><rect x="0.5" y="11" width="14" height="2.5"/><path d="M7.5 9 L13.8 0.5 H1.2 Z"/></svg>
<svg class="abs" style="left:267px;top:819px" width="16" height="16" viewBox="0 0 16 16" fill="#7dbcf0" stroke="#3b78b5" stroke-width="1"><path d="M6.5 0.5 H9.5 V6.5 H15.5 V9.5 H9.5 V15.5 H6.5 V9.5 H0.5 V6.5 H6.5 Z"/></svg>
<svg class="abs" style="left:293px;top:819px" width="16" height="16" viewBox="0 0 16 16"><rect x="0.5" y="6.5" width="15" height="3" fill="#cfe3f5" stroke="#c3d3e2"/></svg>
<svg class="abs" style="left:319px;top:819px" width="16" height="16" viewBox="0 0 16 16" stroke="#c9cdd1"><rect x="5.5" y="0.5" width="10" height="10" fill="#f3f5f7"/><rect x="0.5" y="5.5" width="10" height="10" fill="#cfe3f5"/></svg>
<svg class="abs" style="left:345px;top:819px" width="16" height="16" viewBox="0 0 16 16" shape-rendering="crispEdges"><rect x="0.5" y="0.5" width="15" height="15" fill="#fff" stroke="#444"/><g fill="#7dbcf0"><rect x="2" y="2" width="5" height="5"/><rect x="9" y="2" width="5" height="5"/><rect x="2" y="9" width="5" height="5"/><rect x="9" y="9" width="5" height="5"/></g></svg>
<svg class="abs" style="left:371px;top:819px" width="16" height="16" viewBox="0 0 16 16"><path d="M0.5 13.5 V0.5 H5 L6.5 2.5 H15.5 V13.5 Z" fill="#fde0a6" stroke="#b48a3e"/><rect x="7" y="7" width="9" height="9" fill="#1a7340"/><path d="M9.5 9.5 L13.5 13.5 M13.5 9.5 L9.5 13.5" stroke="#fff" stroke-width="1.4"/></svg>
<div class="t" style="left:391px;top:819px">데이터 가져오기</div>
<svg class="abs" style="left:487px;top:819px" width="17" height="16" viewBox="0 0 17 16" fill="none" stroke="#4a4a4a" stroke-width="1.2"><path d="M0.8 8 L8.5 1 L16.2 8"/><path d="M2.5 7 V15.5 H14.5 V7"/><circle cx="5.5" cy="12.5" r="1.5"/><rect x="9.5" y="9.5" width="4" height="6"/><path d="M10.5 11.5 H12.5 M10.5 13.5 H12.5" stroke-width="0.8"/></svg>
<div class="t" style="left:508px;top:819px">일련화데이터 생성</div>
<svg class="abs" style="left:617px;top:819px" width="16" height="16" viewBox="0 0 16 16"><path d="M0.5 0.5 H11 L13.5 3 V13.5 H0.5 Z" fill="#7dbcf0" stroke="#3a5f86"/><rect x="3" y="0.5" width="7" height="4" fill="#fff" stroke="#3a5f86"/><rect x="2.5" y="7.5" width="6" height="6" fill="#eee" stroke="#3a5f86"/><rect x="7" y="7" width="9" height="9" fill="#1a7340"/><path d="M9.5 9.5 L13.5 13.5 M13.5 9.5 L9.5 13.5" stroke="#fff" stroke-width="1.4"/></svg>
<div class="t" style="left:637px;top:819px">데이터 내보내기</div>
<svg class="abs" style="left:734px;top:819px" width="16" height="16" viewBox="0 0 16 16" fill="none" stroke="#707070" stroke-width="1.3"><path d="M2 7 A6 6 0 0 1 13 4.5"/><path d="M13.5 1.5 V5 H10"/><path d="M14 9 A6 6 0 0 1 3 11.5"/><path d="M2.5 14.5 V11 H6"/></svg>
<div class="t" style="left:754px;top:819px">데이터 초기화</div>
<div class="abs" style="left:213px;top:846px;width:1292px;height:185px;background:#fff;border-radius:4px;overflow:hidden">
<div class="abs" style="left:0;top:0;width:1292px;height:34px;background:#e8e8e8"></div>
<div class="abs" style="left:0;top:34px;width:1292px;height:1px;background:#8e8e8e"></div>
<div class="abs" style="left:49px;top:0;width:1px;height:34px;background:#a9a9a9"></div>
<div class="abs" style="left:49px;top:35px;width:1px;height:150px;background:#e4e4e4"></div>
<div class="abs" style="left:126px;top:0;width:1px;height:34px;background:#a9a9a9"></div>
<div class="abs" style="left:126px;top:35px;width:1px;height:150px;background:#e4e4e4"></div>
<div class="abs" style="left:175px;top:0;width:1px;height:34px;background:#a9a9a9"></div>
<div class="abs" style="left:175px;top:35px;width:1px;height:150px;background:#e4e4e4"></div>
<div class="abs" style="left:286px;top:0;width:1px;height:34px;background:#a9a9a9"></div>
<div class="abs" style="left:286px;top:35px;width:1px;height:150px;background:#e4e4e4"></div>
<div class="abs" style="left:471px;top:0;width:1px;height:34px;background:#a9a9a9"></div>
<div class="abs" style="left:471px;top:35px;width:1px;height:150px;background:#e4e4e4"></div>
<div class="abs" style="left:540px;top:0;width:1px;height:34px;background:#a9a9a9"></div>
<div class="abs" style="left:540px;top:35px;width:1px;height:150px;background:#e4e4e4"></div>
<div class="abs" style="left:613px;top:0;width:1px;height:34px;background:#a9a9a9"></div>
<div class="abs" style="left:613px;top:35px;width:1px;height:150px;background:#e4e4e4"></div>
<div class="abs" style="left:686px;top:0;width:1px;height:34px;background:#a9a9a9"></div>
<div class="abs" style="left:686px;top:35px;width:1px;height:150px;background:#e4e4e4"></div>
<div class="abs" style="left:759px;top:0;width:1px;height:34px;background:#a9a9a9"></div>
<div class="abs" style="left:759px;top:35px;width:1px;height:150px;background:#e4e4e4"></div>
<div class="abs" style="left:832px;top:0;width:1px;height:34px;background:#a9a9a9"></div>
<div class="abs" style="left:832px;top:35px;width:1px;height:150px;background:#e4e4e4"></div>
<div class="abs" style="left:918px;top:0;width:1px;height:34px;background:#a9a9a9"></div>
<div class="abs" style="left:918px;top:35px;width:1px;height:150px;background:#e4e4e4"></div>
<div class="abs" style="left:0;top:59px;width:1275px;height:1px;background:#e4e4e4"></div>
<div class="abs" style="left:0;top:84px;width:1275px;height:1px;background:#e4e4e4"></div>
<div class="abs" style="left:0;top:109px;width:1275px;height:1px;background:#e4e4e4"></div>
<div class="abs" style="left:0;top:134px;width:1275px;height:1px;background:#e4e4e4"></div>
<div class="abs" style="left:0;top:159px;width:1275px;height:1px;background:#e4e4e4"></div>
<div class="abs" style="left:0;top:0;width:1292px;height:185px;border:1px solid #cfd2d5;border-radius:4px"></div>
</div>
<div class="abs th blue" style="left:226px;top:856px">순서</div>
<div class="abs th blue" style="left:303px;top:856px">인쇄</div>
<div class="abs th blue" style="left:352px;top:856px">매수</div>
<div class="abs th" style="left:401px;top:856px">상품코드</div>
<div class="abs th" style="left:512px;top:856px">상품명</div>
<div class="abs th" style="left:696px;top:856px">규격</div>
<div class="abs th" style="left:766px;top:856px">정상매가</div>
<div class="abs th" style="left:839px;top:856px">행사매가</div>
<div class="abs th" style="left:912px;top:856px">행사구분</div>
<div class="abs th" style="left:985px;top:856px">기준단위</div>
<div class="abs th" style="left:1058px;top:856px">단위당가격</div>
<svg class="abs" style="left:275px;top:854px" width="20" height="20"><rect width="20" height="20" rx="3" fill="#0a78d7"/><rect x="6" y="6" width="8" height="8" fill="#fff"/></svg>
<div class="abs td" style="left:213px;width:37px;top:887px;text-align:right">1</div>
<svg class="abs" style="left:287px;top:883px" width="20" height="20"><rect width="20" height="20" rx="3" fill="#0a78d7"/><path d="M4.5 10.5 L8.2 14 L15.5 6" fill="none" stroke="#fff" stroke-width="1.3"/></svg>
<div class="abs td" style="left:339px;width:37px;top:887px;text-align:right">1</div>
<div class="abs td" style="left:401px;top:887px">8801007419688</div>
<div class="abs td" style="left:512px;top:887px">CJ오렌지에이드</div>
<div class="abs td" style="left:696px;top:887px">2L</div>
<div class="abs td" style="left:766px;top:887px">14,900</div>
<div class="abs td" style="left:839px;top:887px">0</div>
<div class="abs td" style="left:912px;top:887px">정상</div>
<div class="abs td" style="left:1058px;top:887px">0</div>
<div class="abs td" style="left:213px;width:37px;top:912px;text-align:right">2</div>
<svg class="abs" style="left:287px;top:908px" width="20" height="20"><rect width="20" height="20" rx="3" fill="#0a78d7"/><path d="M4.5 10.5 L8.2 14 L15.5 6" fill="none" stroke="#fff" stroke-width="1.3"/></svg>
<div class="abs td" style="left:339px;width:37px;top:912px;text-align:right">1</div>
<div class="abs td" style="left:401px;top:912px">8801007419701</div>
<div class="abs td" style="left:512px;top:912px">CJ 자몽에이드</div>
<div class="abs td" style="left:696px;top:912px">2L</div>
<div class="abs td" style="left:766px;top:912px">14,900</div>
<div class="abs td" style="left:839px;top:912px">0</div>
<div class="abs td" style="left:912px;top:912px">정상</div>
<div class="abs td" style="left:1058px;top:912px">0</div>
<div class="abs td" style="left:213px;width:37px;top:937px;text-align:right">3</div>
<svg class="abs" style="left:287px;top:933px" width="20" height="20"><rect width="20" height="20" rx="3" fill="#0a78d7"/><path d="M4.5 10.5 L8.2 14 L15.5 6" fill="none" stroke="#fff" stroke-width="1.3"/></svg>
<div class="abs td" style="left:339px;width:37px;top:937px;text-align:right">1</div>
<div class="abs td" style="left:401px;top:937px">8801037094305</div>
<div class="abs td" style="left:512px;top:937px">동서 콜롬비아나스위트블랙</div>
<div class="abs td" style="left:696px;top:937px">500ml</div>
<div class="abs td" style="left:766px;top:937px">1,350</div>
<div class="abs td" style="left:839px;top:937px">0</div>
<div class="abs td" style="left:912px;top:937px">정상</div>
<div class="abs td" style="left:1058px;top:937px">0</div>
<div class="abs td" style="left:213px;width:37px;top:962px;text-align:right">4</div>
<svg class="abs" style="left:287px;top:958px" width="20" height="20"><rect width="20" height="20" rx="3" fill="#0a78d7"/><path d="M4.5 10.5 L8.2 14 L15.5 6" fill="none" stroke="#fff" stroke-width="1.3"/></svg>
<div class="abs td" style="left:339px;width:37px;top:962px;text-align:right">1</div>
<div class="abs td" style="left:401px;top:962px">8801056101084</div>
<div class="abs td" style="left:512px;top:962px">롯데칠성 2%자두pt</div>
<div class="abs td" style="left:696px;top:962px">500ml</div>
<div class="abs td" style="left:766px;top:962px">1,200</div>
<div class="abs td" style="left:839px;top:962px">0</div>
<div class="abs td" style="left:912px;top:962px">정상</div>
<div class="abs td" style="left:1058px;top:962px">0</div>
<div class="abs td" style="left:213px;width:37px;top:987px;text-align:right">5</div>
<svg class="abs" style="left:287px;top:983px" width="20" height="20"><rect width="20" height="20" rx="3" fill="#0a78d7"/><path d="M4.5 10.5 L8.2 14 L15.5 6" fill="none" stroke="#fff" stroke-width="1.3"/></svg>
<div class="abs td" style="left:339px;width:37px;top:987px;text-align:right">1</div>
<div class="abs td" style="left:401px;top:987px">8801056170059</div>
<div class="abs td" style="left:512px;top:987px">칠성사이다복숭아pt</div>
<div class="abs td" style="left:696px;top:987px">500ml</div>
<div class="abs td" style="left:766px;top:987px">1,500</div>
<div class="abs td" style="left:839px;top:987px">0</div>
<div class="abs td" style="left:912px;top:987px">정상</div>
<div class="abs td" style="left:1058px;top:987px">0</div>
<div class="abs td" style="left:213px;width:37px;top:1012px;text-align:right">6</div>
<svg class="abs" style="left:287px;top:1008px" width="20" height="20"><rect width="20" height="20" rx="3" fill="#0a78d7"/><path d="M4.5 10.5 L8.2 14 L15.5 6" fill="none" stroke="#fff" stroke-width="1.3"/></svg>
<div class="abs td" style="left:339px;width:37px;top:1012px;text-align:right">1</div>
<div class="abs td" style="left:401px;top:1012px">8801105908787</div>
<div class="abs td" style="left:512px;top:1012px">해태 코코팜화이트캔</div>
<div class="abs td" style="left:696px;top:1012px">240ml</div>
<div class="abs td" style="left:766px;top:1012px">650</div>
<div class="abs td" style="left:839px;top:1012px">0</div>
<div class="abs td" style="left:912px;top:1012px">정상</div>
<div class="abs td" style="left:1058px;top:1012px">0</div>
<div class="abs" style="left:1488px;top:881px;width:16px;height:149px;background:#e7e9e8"></div>
<div class="abs" style="left:1488px;top:897px;width:16px;height:32px;background:#bcbcbc"></div>
<svg class="abs" style="left:1488px;top:881px" width="16" height="149"><path d="M4 10.5 L8 6.5 L12 10.5" fill="none" stroke="#505050" stroke-width="1"/><path d="M4 138 L8 142 L12 138" fill="none" stroke="#505050" stroke-width="1"/></svg>
<!-- ===== properties panel ===== -->
<div class="panel" style="left:1514px;top:172px;width:402px;height:864px"></div>
<svg class="abs" style="left:1524px;top:179px" width="15" height="16" viewBox="0 0 15 16"><rect x="0.5" y="0.5" width="13" height="15" fill="#fff" stroke="#555"/><rect x="1" y="1" width="12" height="3" fill="#5c8cbd"/><rect x="9.5" y="1.8" width="2.5" height="1" fill="#fff"/><path d="M5.5 6.5 H11.5 M5.5 9.5 H11.5 M5.5 12.5 H11.5" stroke="#4f87c2"/><path d="M2.7 6.5 H4 M2.7 9.5 H4 M2.7 12.5 H4" stroke="#4f87c2"/></svg>
<div class="t" style="left:1542px;top:179px">속성</div>
<div class="close" style="left:1875px;top:176px">닫기</div>
<!-- selected tab -->
<div class="abs" style="left:1522px;top:209px;width:80px;height:35px;background:#fff;border-radius:4px 0 0 4px;box-shadow:0 3px 6px rgba(100,110,125,.28)"></div>
<!-- white content -->
<div class="abs" style="left:1594px;top:201px;width:313px;height:825px;background:#fff;border-radius:5px"></div>
<div class="t" style="left:1538px;top:217px;font-size:14px;line-height:18px;width:42px;text-align:center">데이터</div>
<div class="t" style="left:1538px;top:252px;font-size:14px;line-height:18px;width:42px;text-align:center">위치및</div>
<div class="t" style="left:1538px;top:270px;font-size:14px;line-height:18px;width:42px;text-align:center">크기</div>
<div class="t" style="left:1538px;top:304px;font-size:14px;line-height:18px;width:42px;text-align:center">텍스트</div>
<div class="t" style="left:1538px;top:340px;font-size:14px;line-height:18px;width:42px;text-align:center">선 및</div>
<div class="t" style="left:1538px;top:358px;font-size:14px;line-height:18px;width:42px;text-align:center">도형</div>
<div class="t" style="left:1538px;top:393px;font-size:14px;line-height:18px;width:42px;text-align:center">효과</div>
<div class="t" style="left:1538px;top:428px;font-size:14px;line-height:18px;width:42px;text-align:center">바코드</div>
<div class="t" style="left:1538px;top:463px;font-size:14px;line-height:18px;width:42px;text-align:center">이미지</div>
<div class="t" style="left:1604px;top:210px;font-size:14px;line-height:18px">직접 입력</div>
<div class="abs" style="left:1604px;top:234px;width:293px;height:53px;border:1px solid #d4d4d4;border-radius:3px;background:#fff"></div>
<div class="t" style="left:1604px;top:292px;color:#1a7fd4">데이터를 연결할 경우 무시됩니다</div>
<div class="t" style="left:1604px;top:328px;font-size:14px;line-height:18px">데이터 연결</div>
<div class="abs" style="left:1603px;top:353px;width:40px;height:20px;border:1px solid #8a8a8a;border-radius:10px;background:#fff"></div>
<div class="abs" style="left:1608px;top:358px;width:10px;height:10px;border-radius:5px;background:#b0b0b0"></div>
<div class="t" style="left:1657px;top:355px;color:#c0c3c6">미사용</div>
</div>
</body>
</html>
